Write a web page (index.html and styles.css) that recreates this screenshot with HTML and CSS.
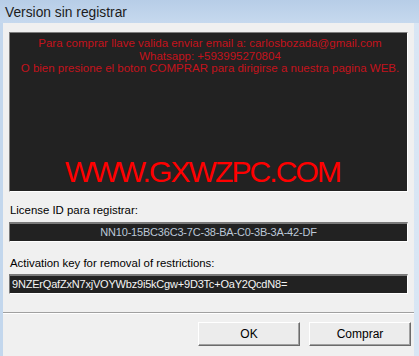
FILE: index.html
```html
<!DOCTYPE html>
<html lang="es">
<head>
    <meta charset="UTF-8">
    <meta name="viewport" content="width=device-width, initial-scale=1.0">
    <title>Version sin registrar</title>
    <link rel="stylesheet" href="styles.css">
</head>
<body>
    <div class="window">
        <div class="titlebar">Version sin registrar</div>
        <div class="client">
            <div class="content">
                <div class="panel">
                    <div class="messages">
                        <p>Para comprar llave valida enviar email a: carlosbozada@gmail.com</p>
                        <p>Whatsapp: +593995270804</p>
                        <p>O bien presione el boton COMPRAR para dirigirse a nuestra pagina WEB.</p>
                    </div>
                    <div class="site">WWW.GXWZPC.COM</div>
                </div>

                <label class="field-label">License ID para registrar:</label>
                <div class="field field-center">NN10-15BC36C3-7C-38-BA-C0-3B-3A-42-DF</div>

                <label class="field-label label-second">Activation key for removal of restrictions:</label>
                <div class="field field-key">9NZErQafZxN7xjVOYWbz9i5kCgw+9D3Tc+OaY2QcdN8=</div>
            </div>
            <div class="footer">
                <button class="btn">OK</button>
                <button class="btn">Comprar</button>
            </div>
        </div>
    </div>
</body>
</html>
```

FILE: styles.css
```css
html, body {
    margin: 0;
    padding: 0;
}

body {
    width: 419px;
    height: 356px;
    overflow: hidden;
    font-family: "Liberation Sans", Arial, sans-serif;
    background-color: #c9dbef;
}

.window {
    height: 356px;
    display: flex;
    flex-direction: column;
    padding: 0 5px 0 3px;
    background: linear-gradient(90deg, #c3d7ed, #cfdff1 60%, #d9e6f4);
}

.titlebar {
    height: 23px;
    line-height: 25px;
    font-size: 13.8px;
    color: #1c1c1c;
    margin: 0 -5px 0 -3px;
    padding-left: 5px;
    background: linear-gradient(#b7cde7, #c6d9ee);
}

.client {
    flex: 1;
    display: flex;
    flex-direction: column;
    background-color: #f0f0f0;
}

.content {
    padding: 9px 6px 0 6px;
    height: 290px;
    box-sizing: border-box;
    border-bottom: 1px solid #a0a0a0;
}

.panel {
    height: 160px;
    box-sizing: border-box;
    background-color: #222222;
    border: 1px solid;
    border-color: #7d7d7d #ffffff #ffffff #7d7d7d;
    display: flex;
    flex-direction: column;
    align-items: center;
}

.messages {
    padding-top: 4px;
    padding-left: 3px;
    text-align: center;
    color: #c4121c;
    font-size: 11.5px;
}

.messages p {
    margin: 0;
    line-height: 12.6px;
}

.site {
    margin-top: auto;
    margin-bottom: 2px;
    margin-right: 12px;
    font-size: 30px;
    line-height: 34px;
    letter-spacing: -1.9px;
    color: #ff0000;
}

.field-label {
    display: block;
    margin: 11px 0 4px 1px;
    font-size: 11.4px;
    line-height: 15px;
    color: #000;
}

.label-second {
    margin-top: 14px;
    margin-bottom: 3px;
}

.field {
    height: 20px;
    box-sizing: border-box;
    background-color: #222222;
    border: 1px solid;
    border-top: 2px solid #7a7a7a;
    border-color: #7a7a7a #ffffff #ffffff #7a7a7a;
    font-size: 11px;
    line-height: 17px;
    letter-spacing: -0.2px;
}

.field-center {
    text-align: center;
    color: #bcc8d8;
}

.field-key {
    color: #f4f4f4;
    padding-left: 2px;
}

.footer {
    flex: 1;
    border-top: 1px solid #ffffff;
    display: flex;
    justify-content: flex-end;
    align-items: flex-start;
    gap: 9px;
    padding: 8px 3px 0 0;
}

.btn {
    width: 102px;
    height: 24px;
    font-family: "Liberation Sans", Arial, sans-serif;
    font-size: 12px;
    color: #000;
    background-color: #ececec;
    border: 1px solid;
    border-color: #ffffff #6b6b6b #6b6b6b #ffffff;
    box-shadow: inset -1px -1px 0 #a0a0a0;
    padding: 0;
}
```
